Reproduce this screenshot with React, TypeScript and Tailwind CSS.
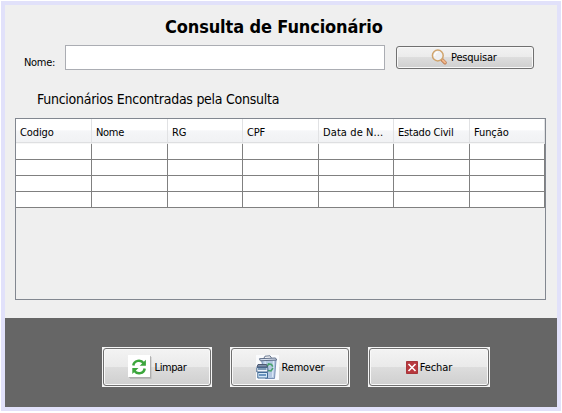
import type { ReactNode } from 'react';

const columns = [
  { label: 'Codigo', width: 'w-[76px]', tracking: 'tracking-[-0.1px]' },
  { label: 'Nome', width: 'w-[76px]', tracking: 'tracking-[-0.3px]' },
  { label: 'RG', width: 'w-[75px]', tracking: 'tracking-[-0.2px]' },
  { label: 'CPF', width: 'w-[76px]', tracking: 'tracking-[-0.2px]' },
  { label: 'Data de N...', width: 'w-[75px]', tracking: 'tracking-[0.1px]' },
  { label: 'Estado Civil', width: 'w-[76px]', tracking: 'tracking-[-0.2px]' },
  { label: 'Função', width: 'w-[75px]', tracking: 'tracking-[-0.1px]' },
];

function SearchIcon() {
  return (
    <svg width="17" height="17" viewBox="0 0 17 17" className="shrink-0">
      <path d="M11 10.7l3 3" stroke="#bd7c50" strokeWidth="3.6" strokeLinecap="round" />
      <path d="M11.8 11.3l2.2 2.2" stroke="#f2b88c" strokeWidth="2" strokeLinecap="round" />
      <circle cx="6.8" cy="6.5" r="5.4" fill="#eff0f2" stroke="#d0a46c" strokeWidth="1.5" />
      <path d="M3.8 7.2a3.2 3.2 0 0 1 3-4" fill="none" stroke="#fff" strokeWidth="1.2" />
    </svg>
  );
}

function RefreshIcon() {
  return (
    <svg width="24" height="25" viewBox="0 0 24 25" className="shrink-0">
      <path d="M2 2h21.500v22H2z" fill="#a8a8a8" opacity=".6" />
      <path d="M1 1h22v22H1z" fill="#aaa" opacity=".7" />
      <path d="M0 0h22v22H0z" fill="#fff" />
      <g fill="none" stroke="#3ca63c" strokeWidth="2.5">
        <path d="M5.300 10.500c.7-5.300 7.500-6.300 10.400-2.300" />
        <path d="M16.700 13.500c-.7 5.300-7.500 6.300-10.400 2.300" />
      </g>
      <path d="M17.900 4.800v6h-6.200zM4.300 19v-6h6.200z" fill="#3ca63c" />
    </svg>
  );
}

function TrashIcon() {
  return (
    <svg width="23" height="25" viewBox="0 0 23 25" className="shrink-0">
      <path d="M0 0h23v25H0z" fill="#fafbfd" />
      <path d="M5.500 5h14.500l-1.500 18.500h-9z" fill="#b4c8e2" stroke="#7890b5" />
      <path d="M9 6l1.500 16M17.500 6l-1 16" stroke="#dce8f7" strokeWidth="1.2" />
      <path d="M3.500 3.700l16-.7 1.200 2-16.400.8z" fill="#d8e1ef" stroke="#5f6e88" />
      <path d="M8 3l1-1.800 5-.4L15.500 3" fill="none" stroke="#66758d" />
      <path d="M11 12l1.500-3 3 .5 1.300 2.200M17 13l-2 3-3-.5" fill="none" stroke="#49a36d" strokeWidth="1.6" />
      <path d="M2 9.500h8.500l1 2.500H1z" fill="#8092ad" stroke="#4c5870" />
      <path d="M.8 12.500h11V17H.8z" fill="#f0f5fb" stroke="#48678c" />
      <path d="M2 14h8.500" stroke="#3d668f" strokeWidth="1.300" />
      <path d="M1.800 17.500h9.700V23H1.800z" fill="#d5e7f5" stroke="#406b96" />
      <path d="M3 20h7" stroke="#477bb0" strokeWidth="1.500" />
    </svg>
  );
}

function CloseIcon() {
  return (
    <svg width="12" height="13" viewBox="0 0 12 13" className="shrink-0">
      <path d="M.5.5h11v12H.5z" fill="#b8383e" stroke="#a7363a" />
      <path d="M2.500 3l7 7M9.500 3l-7 7" stroke="#fff" strokeWidth="1.600" />
    </svg>
  );
}

function FooterButton({ className, children }: { className: string; children: ReactNode }) {
  return (
    <div className={`h-10 border border-[#f5f5f5] bg-[#f5f5f5] ${className}`}>
      <button className="flex h-full w-full items-center justify-center rounded-[3px] border border-[#707070] bg-[linear-gradient(#f3f3f3_0%,#eaeaea_49%,#dddddd_50%,#cfcfcf_100%)] shadow-[inset_0_0_0_1px_#f8f8f8]">
        {children}
      </button>
    </div>
  );
}

export default function App() {
  return (
    <div className="h-[413px] w-[562px] bg-white pt-px pl-px font-['DejaVu_Sans_Condensed','DejaVu_Sans',sans-serif] text-[11px] leading-[14px] text-black">
      <main className="flex h-[410px] w-[560px] flex-col border-4 border-[#e1e1fa] bg-[#efefef] whitespace-nowrap">
        <h1 className="mt-[11px] h-[22px] pl-[160px] text-[18px] leading-[22px] font-bold tracking-[-0.12px]">
          Consulta de Funcionário
        </h1>
        <div className="mt-[7px] flex h-[25px]">
          <label className="ml-[19px] w-[41px] pt-[11px] tracking-[-0.3px]">Nome:</label>
          <input className="h-[25px] w-[320px] border border-[#abadb3] bg-white" />
          <button className="mt-px ml-[11px] flex h-[23px] w-[138px] items-center rounded-[3px] border border-[#707070] bg-[linear-gradient(#f2f2f2_0%,#ebebeb_49%,#dddddd_50%,#cfcfcf_100%)] pl-[34px] shadow-[inset_0_0_0_1px_#f8f8f8]">
            <SearchIcon />
            <span className="ml-[3px] tracking-[-0.2px]">Pesquisar</span>
          </button>
        </div>
        <h2 className="mt-[20px] ml-[32px] h-[18px] text-[14px] leading-[18px] tracking-[-0.26px]">
          Funcionários Encontradas pela Consulta
        </h2>
        <section className="mt-[10px] ml-[10px] h-[182px] w-[531px] border border-[#828790]">
          <div className="flex h-[25px] bg-[linear-gradient(#fff_0%,#fff_42%,#f5f6f8_48%,#f1f2f4_90%,#dedfe1_94%,#f7f7f7_98%)]">
            {columns.map((column) => (
              <div key={column.label} className={`border-r border-[#e1e2e4] pt-[7px] pl-1 ${column.width} ${column.tracking}`}>
                {column.label}
              </div>
            ))}
          </div>
          {[0, 1, 2, 3].map((row) => (
            <div key={row} className="flex h-4">
              {columns.map((column) => (
                <div key={column.label} className={`border-r border-b border-[#808080] bg-white ${column.width}`} />
              ))}
            </div>
          ))}
        </section>
        <footer className="mt-auto flex h-[89px] bg-[#666] pt-[29px]">
          <FooterButton className="ml-[97px] w-[110px]">
            <RefreshIcon />
            <span className="ml-[3px] pt-0.5 tracking-[-0.4px]">Limpar</span>
          </FooterButton>
          <FooterButton className="ml-[18px] w-[120px]">
            <TrashIcon />
            <span className="ml-[3px] pt-0.5 tracking-[-0.2px]">Remover</span>
          </FooterButton>
          <FooterButton className="ml-[18px] w-[122px]">
            <CloseIcon />
            <span className="ml-[2px] pt-0.5 tracking-[-0.1px]">Fechar</span>
          </FooterButton>
        </footer>
      </main>
    </div>
  );
}
